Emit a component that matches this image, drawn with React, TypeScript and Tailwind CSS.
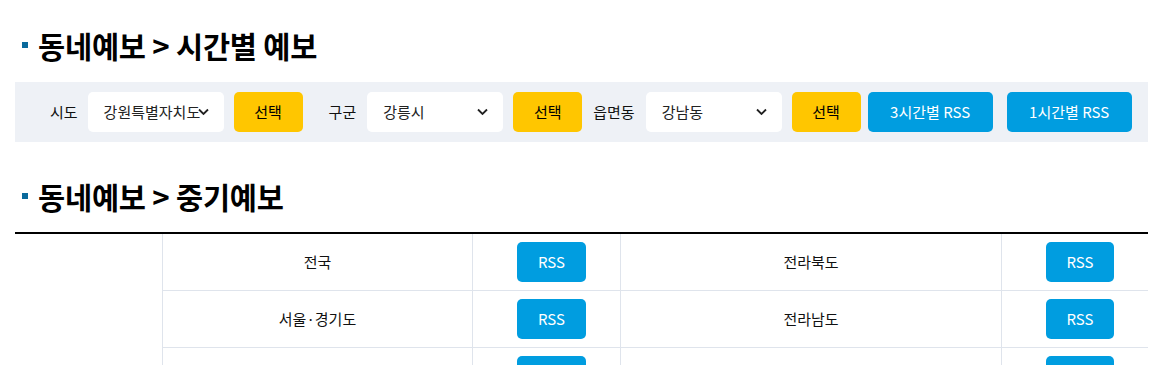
import { ReactNode } from "react";

const font = { fontFamily: '"Noto Sans CJK KR", "Noto Sans", sans-serif' };

const Chevron = () => (
  <svg
    width="11"
    height="7"
    viewBox="0 0 11 7"
    fill="none"
    className="absolute right-[15px] top-1/2 -translate-y-1/2"
  >
    <path d="M1 1l4.5 4.5L10 1" stroke="#222" strokeWidth="1.8" />
  </svg>
);

const SelectBox = ({ value, className = "" }: { value: string; className?: string }) => (
  <div
    className={`relative h-10 w-[136px] rounded-[5px] bg-white pl-4 pr-2 flex items-center overflow-hidden whitespace-nowrap text-[15px] text-[#222] ${className}`}
  >
    {value}
    <Chevron />
  </div>
);

const YellowBtn = ({ className = "" }: { className?: string }) => (
  <button className={`h-10 w-[69px] rounded-[5px] bg-[#ffc600] text-[15px] text-black ${className}`}>
    선택
  </button>
);

const BlueBtn = ({ children, className = "" }: { children: ReactNode; className?: string }) => (
  <button
    className={`h-10 rounded-[5px] bg-[#009de0] text-[15px] text-white ${className}`}
  >
    {children}
  </button>
);

const Title = ({ children }: { children: ReactNode }) => (
  <h2 className="flex items-center pl-[22px] text-[29.5px] font-bold leading-[40px] tracking-[-0.2px] text-black">
    <span className="mr-[10px] inline-block h-[6px] w-[6px] bg-[#0a6a9c]" />
    {children}
  </h2>
);

const rows = [
  ["전국", "전라북도"],
  ["서울·경기도", "전라남도"],
  ["", ""],
];

export default function App() {
  return (
    <div className="h-[365px] w-[1152px] overflow-hidden bg-white" style={font}>
      <div className="pt-[25px]">
        <Title>동네예보 &gt; 시간별 예보</Title>
      </div>

      {/* 검색 조건 */}
      <div className="ml-[15px] mt-[17px] flex w-[1133px] items-center bg-[#eef1f6] py-[10px] pl-[35px] text-[15px] text-[#111]">
        <span className="mr-[10px]">시도</span>
        <SelectBox value="강원특별자치도" />
        <YellowBtn className="ml-[10px] w-[68px]" />
        <span className="ml-[26px] mr-[10px]">구군</span>
        <SelectBox value="강릉시" className="ml-px" />
        <YellowBtn className="ml-[10px]" />
        <span className="ml-[11px] mr-[10px]">읍면동</span>
        <SelectBox value="강남동" className="ml-px w-[135px]" />
        <YellowBtn className="ml-[10px]" />
        <BlueBtn className="ml-[7px] w-[125px]">3시간별 RSS</BlueBtn>
        <BlueBtn className="ml-[14px] w-[125px]">1시간별 RSS</BlueBtn>
      </div>

      <div className="mt-[34px]">
        <Title>동네예보 &gt; 중기예보</Title>
      </div>

      {/* 중기예보 표 */}
      <div className="ml-[15px] mt-[16px] w-[1133px] border-t-2 border-black">
        <div className="grid grid-cols-[147px_310px_148px_381px_147px] text-[15px] text-[#111]">
          {rows.map(([a, b], i) => (
            <div key={i} className="contents">
              <div className="h-[57px]" />
              <div className="flex h-[57px] items-center justify-center border-b border-l border-[#dfe4ec]">
                {a}
              </div>
              <div className="flex h-[57px] items-start justify-center border-b border-l border-[#dfe4ec] pl-[10px] pt-[8px]">
                <BlueBtn className="w-[69px]">RSS</BlueBtn>
              </div>
              <div className="flex h-[57px] items-center justify-center border-b border-l border-[#dfe4ec]">
                {b}
              </div>
              <div className="flex h-[57px] items-start justify-center border-b border-l border-[#dfe4ec] pl-[10px] pt-[8px]">
                <BlueBtn className="w-[68px]">RSS</BlueBtn>
              </div>
            </div>
          ))}
        </div>
      </div>
    </div>
  );
}
